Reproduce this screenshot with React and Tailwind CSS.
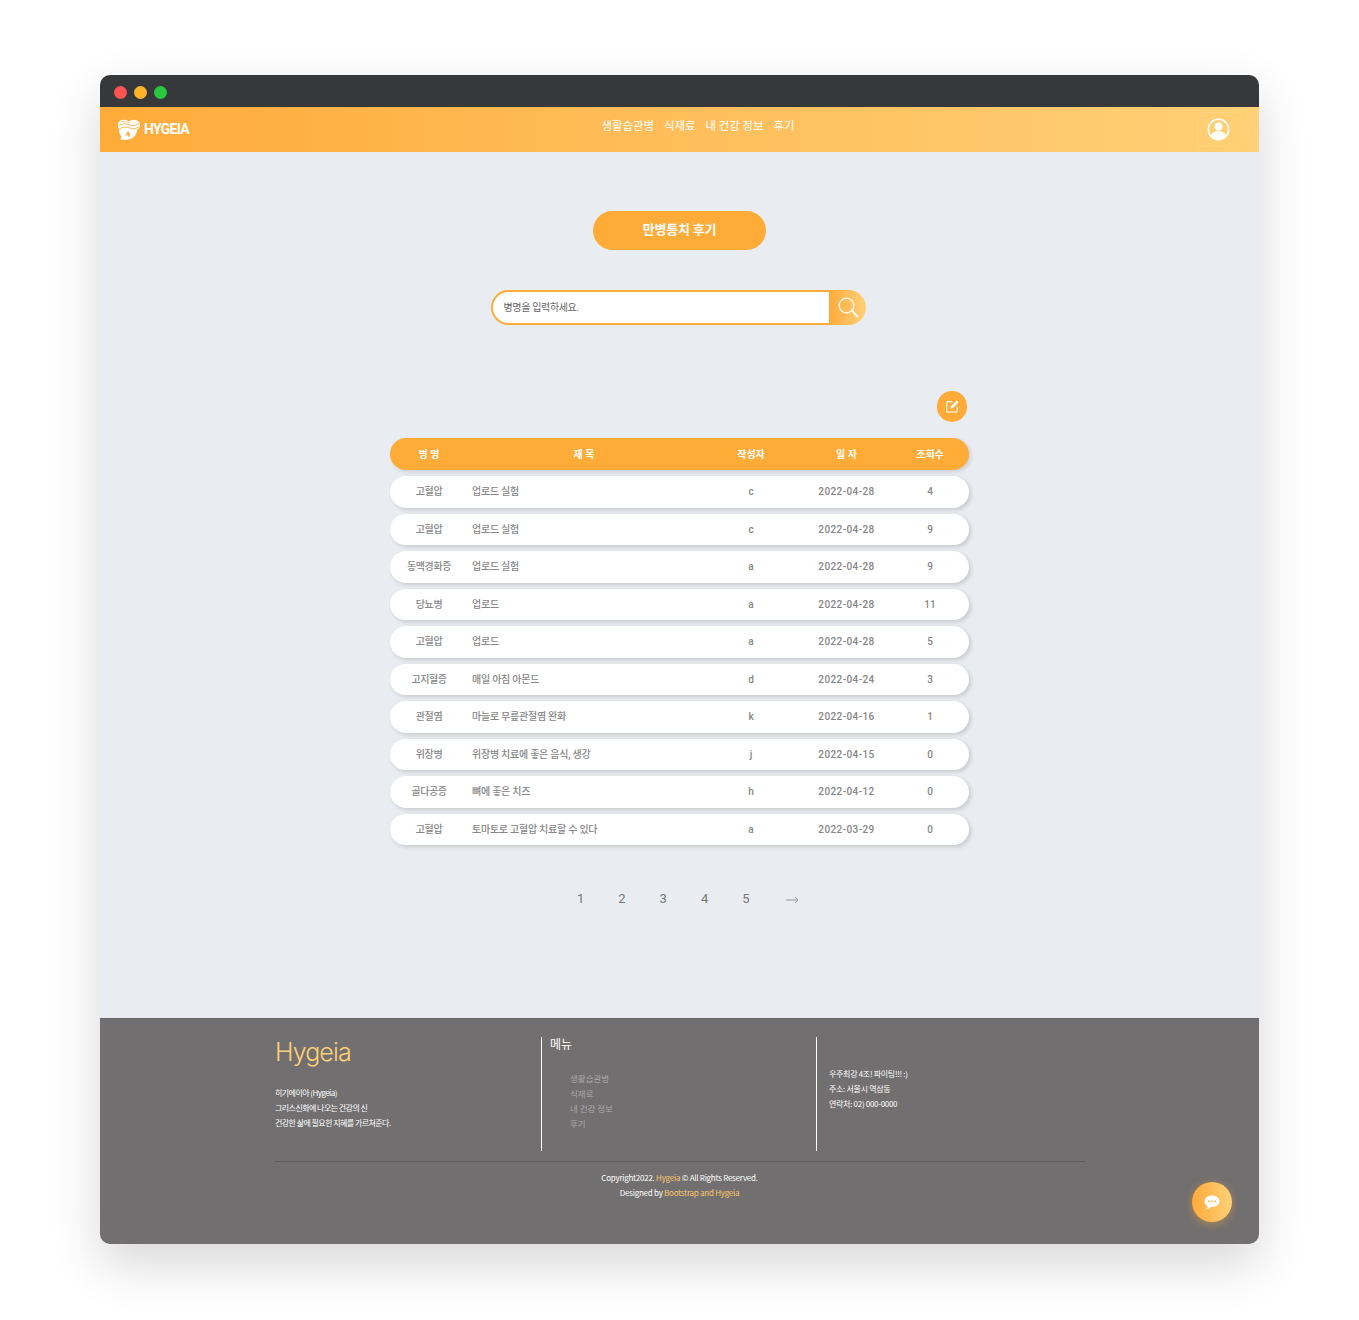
import React from "react";

const rows = [
  ["고혈압", "업로드 실험", "c", "2022-04-28", "4"],
  ["고혈압", "업로드 실험", "c", "2022-04-28", "9"],
  ["동맥경화증", "업로드 실험", "a", "2022-04-28", "9"],
  ["당뇨병", "업로드", "a", "2022-04-28", "11"],
  ["고혈압", "업로드", "a", "2022-04-28", "5"],
  ["고지혈증", "매일 아침 아몬드", "d", "2022-04-24", "3"],
  ["관절염", "마늘로 무릎관절염 완화", "k", "2022-04-16", "1"],
  ["위장병", "위장병 치료에 좋은 음식, 생강", "j", "2022-04-15", "0"],
  ["골다공증", "뼈에 좋은 치즈", "h", "2022-04-12", "0"],
  ["고혈압", "토마토로 고혈압 치료할 수 있다", "a", "2022-03-29", "0"],
];
const font = "font-['Roboto','Noto_Sans_CJK_KR',sans-serif]";
const gridCols = "grid grid-cols-[78px_232px_102px_89px_78px] items-center";

function Logo() {
  return (
    <svg width="24" height="21" viewBox="0 0 24 21" fill="none">
      <path d="M1 6C1 2.500 4 .5 7.500.8 9.500 1 11 1.800 12 2.500 13.500 1.200 15.500.5 17.500.8 21 1.300 23.500 3.500 23 6.500 22.500 9.500 21 10 20 11 20 15 17 19 13 20 10 21 6 21.500 3 20 4 19 5 18.500 4.500 18 2.500 15 2 12 2 10 1.300 9 1 7.500 1 6Z" fill="#fff" />
      <path d="M2 7C6 3.500 10 5 13 6 16 7 19 6.500 22.500 4" stroke="#ffae3c" strokeWidth=".9" />
      <path d="M2.500 10C6 7.500 10 8 13 9 16 10 18.500 10 21.500 8" stroke="#ffae3c" strokeWidth=".9" />
      <path d="M4 2.800C7 1.800 10 2.800 12.500 4" stroke="#ffae3c" strokeWidth=".6" />
      <path d="M11 11.500c.5 1.800 2.700 3 1.900 5-.4 1-1.300 1.500-2.400 1.700 1-1 .6-2.200.1-2.900-.5 1-1 1.400-1.700 2-.7-2.500 1.700-3.500 2.100-5.800Z" fill="#ffae3c" />
    </svg>
  );
}

export default function App() {
  return (
    <div className={`${font} min-h-[1320px] bg-white pt-[75px] px-[100px]`}>
      <div className="w-[1159px] rounded-[10px] overflow-hidden bg-[#e9ecf1] shadow-[0_20px_50px_rgba(0,0,0,0.16)]">
        <div className="h-8 bg-[#37383a] flex items-center gap-[7px] pl-[13.500px] pt-[2px]">
          <span className="w-[13px] h-[13px] rounded-full bg-[#fc5453]" />
          <span className="w-[13px] h-[13px] rounded-full bg-[#fdb32a]" />
          <span className="w-[13px] h-[13px] rounded-full bg-[#29c83e]" />
        </div>

        <header className="h-[45px] bg-gradient-to-r from-[#ffab38] to-[#ffd076] relative flex items-center justify-center">
          <div className="absolute left-[17px] top-[12px] flex items-center gap-[3px]">
            <Logo />
            <span className="text-white font-bold text-[14px] tracking-[-0.7px]">HYGEIA</span>
          </div>
          <nav className="flex gap-[10px] text-white text-[11.400px] -mt-[5px] ml-[37px]">
            <span>생활습관병</span>
            <span>식재료</span>
            <span>내 건강 정보</span>
            <span>후기</span>
          </nav>
          <div className="absolute left-[1096px] top-[5px] w-[45px] h-[35px] border border-white/10 rounded flex items-center justify-center">
            <svg className="ml-[0.500px]" width="23" height="23" viewBox="0 0 23 23" fill="none">
              <circle cx="11.500" cy="11.500" r="10.200" stroke="#fff" strokeWidth="1.500" />
              <circle cx="11.500" cy="8.500" r="4" fill="#fff" />
              <path d="M4 17.500c1-3 4-4.500 7.500-4.500s6.500 1.500 7.500 4.500c-2 2.200-4.600 3.500-7.500 3.500S6 19.700 4 17.500Z" fill="#fff" />
            </svg>
          </div>
        </header>

        <main className="h-[866px] flex flex-col items-center pt-[59px]">
          <div className="w-[173px] h-[39px] pb-[2px] rounded-full bg-[#ffab38] text-white font-bold text-[13px] tracking-[-0.2px] flex items-center justify-center">
            만병통치 후기
          </div>

          <div className="mt-10 w-[375px] h-[35px] flex -ml-[3px]">
            <div className="w-[338px] border-2 border-r-0 border-[#ffab38] bg-white rounded-l-[18px] flex items-center pl-[11px] text-[10px] tracking-[-0.35px] text-[#666]">
              병명을 입력하세요.
            </div>
            <div className="w-[37px] pl-[2px] rounded-r-[18px] bg-gradient-to-r from-[#ffab38] to-[#ffd076] flex items-center justify-center">
              <svg width="21" height="21" viewBox="0 0 21 21" fill="none" stroke="#fff">
                <circle cx="8.500" cy="8.500" r="7.300" strokeWidth="1.200" />
                <path d="M14 14l5.500 5.500" strokeWidth="1.800" strokeLinecap="round" />
              </svg>
            </div>
          </div>

          <div className="w-[579px] mt-[66px] flex justify-end pr-[2px]">
            <div className="w-[30px] h-[31px] rounded-full bg-[#ffab38] flex items-center justify-center">
              <svg width="13" height="13" viewBox="0 0 12 12" fill="none" stroke="#fff" strokeWidth="1">
                <path d="M6 1.500H1.500a.8.800 0 0 0-.8.800v7.900c0 .5.400.9.800.9h7.900c.5 0 .9-.4.900-.9V6" />
                <path d="M4.500 7.500l.4-1.800L10 .7l1.300 1.300L6.300 7.100l-1.800.4Z" fill="#fff" strokeWidth=".5" />
              </svg>
            </div>
          </div>

          <div className="w-[579px] mt-4 flex flex-col gap-[6px]">
            <div className={`${gridCols} h-8 rounded-full bg-[#ffab38] text-white font-bold text-[10px] text-center shadow-[2px_2px_4px_rgba(0,0,0,0.12)]`}>
              <span>병 명</span>
              <span>제 목</span>
              <span>작성자</span>
              <span>일 자</span>
              <span>조회수</span>
            </div>
            {rows.map((r, i) => (
              <div key={i} className={`${gridCols} h-[31.5px] rounded-full bg-white text-[10px] text-[#868686] font-medium text-center shadow-[2px_2px_4px_rgba(0,0,0,0.15)]`}>
                <span className="tracking-[-0.4px]">{r[0]}</span>
                <span className="text-left pl-1 tracking-[-0.25px]">{r[1]}</span>
                <span>{r[2]}</span>
                <span className="tracking-[0.4px]">{r[3]}</span>
                <span>{r[4]}</span>
              </div>
            ))}
          </div>

          <div className="mt-[44px] h-5 flex items-center text-[13px] text-[#777] w-[579px] -ml-[2px] pl-[171px]">
            {["1", "2", "3", "4", "5"].map((n) => (
              <span key={n} className="w-[41.300px] text-center">{n}</span>
            ))}
            <span className="ml-[5px] mt-[1px] w-[41.300px] flex justify-center">
              <svg width="13" height="8" viewBox="0 0 13 8" fill="none" stroke="#999" strokeWidth="1">
                <path d="M0 4h12M9 1l3 3-3 3" />
              </svg>
            </span>
          </div>
        </main>

        <footer className="h-[226px] bg-[#716f70] relative border-t border-[#666] font-['Noto_Sans_CJK_KR',sans-serif]">
          <div className="ml-[175px] w-[810px] pt-[18px]">
            <div className="flex h-[114px]">
              <div className="w-[266px]">
                <div className="text-[#ffd076] text-[25px] tracking-[-0.9px] leading-[30px] font-['Inter',sans-serif] font-light">Hygeia</div>
                <div className="mt-[18px] text-white text-[8px] leading-[15px] tracking-[-0.55px]">
                  <div>히기에이아 (Hygeia)</div>
                  <div>그리스신화에 나오는 건강의 신</div>
                  <div>건강한 삶에 필요한 지혜를 가르쳐준다.</div>
                </div>
              </div>
              <div className="w-[275px] border-l border-white pl-2">
                <div className="text-white text-[12px] leading-[14px]">메뉴</div>
                <div className="mt-5 pl-5 text-[#a9a9a9] text-[8.500px] leading-[15px]">
                  <div>생활습관병</div>
                  <div>식재료</div>
                  <div>내 건강 정보</div>
                  <div>후기</div>
                </div>
              </div>
              <div className="flex-1 border-l border-white pl-3 pt-[29px] text-white text-[8px] leading-[15px] tracking-[-0.3px]">
                <div>우주최강 4조! 파이팅!!! :)</div>
                <div>주소: 서울시 역삼동</div>
                <div>연락처: 02) 000-0000</div>
              </div>
            </div>
            <div className="mt-[10px] border-t border-[#5e5e5e]" />
            <div className="mt-2 text-center text-white text-[8px] leading-[15px] tracking-[-0.25px] -ml-[1px]">
              <div>Copyright2022. <span className="text-[#ffc76a]">Hygeia</span> © All Rights Reserved.</div>
              <div>Designed by <span className="text-[#ffc76a]">Bootstrap and Hygeia</span></div>
            </div>
          </div>
          <div className="absolute left-[1092px] top-[163px] w-10 h-10 rounded-full bg-gradient-to-r from-[#ffab38] to-[#ffd076] shadow-[0_2px_10px_rgba(255,171,56,0.45)] flex items-center justify-center">
            <svg width="16" height="15" viewBox="0 0 16 15">
              <path d="M8 .5c4.200 0 7.500 2.600 7.500 5.800S12.200 12 8 12c-.6 0-1.200 0-1.800-.1C5.300 13 3.900 14 2.500 14.300c.7-.9 1-2 1-3.300C1.700 10 .5 8.300.5 6.300.5 3.100 3.800.5 8 .5Z" fill="#fff" />
              <circle cx="4.800" cy="6.300" r="1" fill="#ffbd5c" />
              <circle cx="8" cy="6.300" r="1" fill="#ffbd5c" />
              <circle cx="11.200" cy="6.300" r="1" fill="#ffbd5c" />
            </svg>
          </div>
        </footer>
      </div>
    </div>
  );
}
